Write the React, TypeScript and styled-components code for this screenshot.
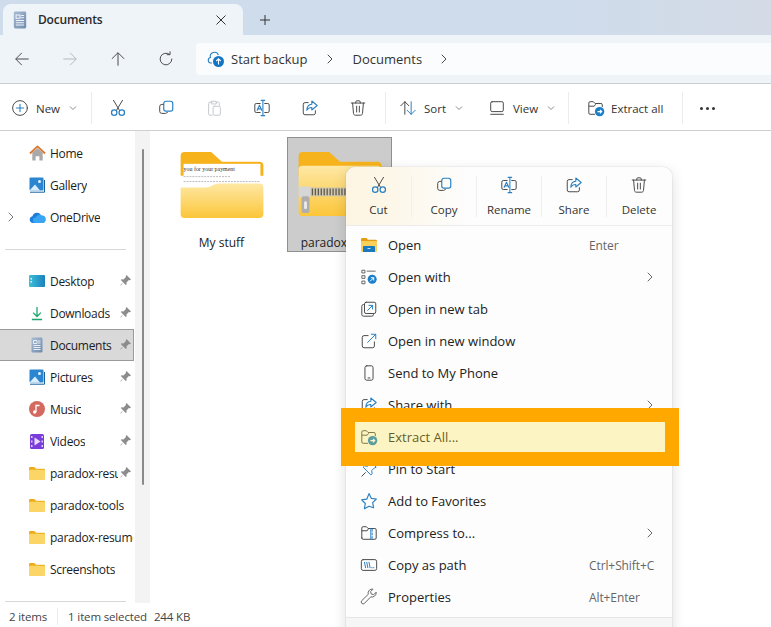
import React from 'react';
import styled, { createGlobalStyle } from 'styled-components';

const GlobalStyle = createGlobalStyle`
  html, body {
    margin: 0;
    padding: 0;
    height: 100%;
    overflow: hidden;
    background: #ffffff;
  }
  * {
    box-sizing: border-box;
  }
`;

const DARK = '#4a4a4a';
const BLUE = '#2a80c2';

type IconProps = { size?: number };

const Line = (p: React.SVGProps<SVGSVGElement> & { size?: number }) => {
  const { size = 18, children, ...rest } = p;
  return (
    <svg width={size} height={size} viewBox="0 0 20 20" fill="none" stroke={DARK} strokeWidth="1.1" strokeLinecap="round" strokeLinejoin="round" {...rest}>
      {children}
    </svg>
  );
};

const CutIcon = ({ size }: IconProps) => (
  <Line size={size}>
    <path d="M5 1.5l6.6 11M15 1.5l-6.6 11" />
    <circle cx="5.8" cy="15.2" r="3" stroke={BLUE} strokeWidth="1.4" />
    <circle cx="14.2" cy="15.2" r="3" stroke={BLUE} strokeWidth="1.4" />
  </Line>
);
const CopyIcon = ({ size }: IconProps) => (
  <Line size={size}>
    <rect x="7.5" y="2.5" width="10" height="11" rx="2.4" stroke={BLUE} strokeWidth="1.3" />
    <path d="M7 6H5.4a2.4 2.4 0 0 0-2.4 2.4v5.2a2.4 2.4 0 0 0 2.4 2.4h4.2a2.4 2.4 0 0 0 2-1.2" />
  </Line>
);
const PasteIcon = ({ size }: IconProps) => (
  <Line size={size} stroke="#c4c9cc">
    <path d="M8 3.5H5.5A1.5 1.5 0 0 0 4 5v11.5A1.5 1.5 0 0 0 5.5 18H8" />
    <path d="M7.5 2.5h5v3h-5zM12.5 3.5h2A1.5 1.5 0 0 1 16 5v2" />
    <rect x="9" y="8" width="8" height="10" rx="1.4" />
  </Line>
);
const RenameIcon = ({ size }: IconProps) => (
  <Line size={size}>
    <path d="M8 5H3.6A1.6 1.6 0 0 0 2 6.6v6.8A1.6 1.6 0 0 0 3.6 15H8M13 5h3.4A1.6 1.6 0 0 1 18 6.6v6.8a1.6 1.6 0 0 1-1.6 1.6H13" />
    <path d="M4.6 12.6L7.2 7l2.6 5.6M5.5 11h3.4" stroke={BLUE} strokeWidth="1.2" />
    <path d="M9 1.5h4M11 1.5v17M9 18.5h4" stroke={BLUE} strokeWidth="1.2" />
  </Line>
);
const ShareIcon = ({ size }: IconProps) => (
  <Line size={size}>
    <path d="M8 4H4.5A2 2 0 0 0 2.5 6v9.5a2 2 0 0 0 2 2H14a2 2 0 0 0 2-2V13" />
    <path d="M12 2.2l6 5-6 5V9.5c-2.6 0-4.4 1-5.6 3 .2-3.8 2.2-6.4 5.6-6.6z" stroke={BLUE} strokeWidth="1.2" />
  </Line>
);
const DeleteIcon = ({ size }: IconProps) => (
  <Line size={size}>
    <path d="M2.5 4.5h15M7.5 4.5V3.2c0-.7.5-1.2 1.2-1.2h2.6c.7 0 1.2.5 1.2 1.2v1.3" />
    <path d="M4 4.5l1 11.6c.1 1.1 1 1.9 2 1.9h6c1 0 1.9-.8 2-1.9l1-11.6M8.5 8v6.5M11.5 8v6.5" />
  </Line>
);
const NewIcon = () => (
  <Line>
    <circle cx="10" cy="10" r="8.2" />
    <path d="M10 6v8M6 10h8" stroke={BLUE} strokeWidth="1.2" />
  </Line>
);
const SortIcon = () => (
  <Line>
    <path d="M6.5 17V3M2 7.5L6.5 3 11 7.5" />
    <path d="M13.5 3v14M9 12.5l4.5 4.5 4.5-4.5" stroke={BLUE} />
  </Line>
);
const ViewIcon = () => (
  <Line>
    <rect x="3" y="3" width="14" height="11" rx="1.6" />
    <path d="M3 17h14" />
  </Line>
);
const ExtractIcon = () => (
  <svg width="18" height="18" viewBox="0 0 20 20" fill="none">
    <path d="M2 15.5V4.5A1.5 1.5 0 0 1 3.5 3H7l2 2h6.500A1.500 1.500 0 0 1 17 6.500V9M2 8h6l1.600-2.200M2 15.500A1.500 1.500 0 0 0 3.500 17H9" stroke={DARK} strokeWidth="1.1" />
    <circle cx="14" cy="14" r="5.2" fill="#1a7fc9" />
    <path d="M11.6 14h4.6M14.4 12l2 2-2 2" stroke="#fff" strokeWidth="1.2" />
  </svg>
);
const ArrowLeft = () => (
  <Line>
    <path d="M17 10H3.5M9.5 3.5L3 10l6.5 6.5" />
  </Line>
);
const ArrowRight = () => (
  <Line stroke="#b4b9bd">
    <path d="M3 10h13.5M10.5 3.5L17 10l-6.5 6.5" />
  </Line>
);
const ArrowUp = () => (
  <Line>
    <path d="M10 17V3.5M3.5 9.5L10 3l6.5 6.5" />
  </Line>
);
const Refresh = () => (
  <Line>
    <path d="M16.5 10a6.5 6.5 0 1 1-2.600-5.200M14.500 2v3.200h-3.200" />
  </Line>
);
const Chevron = ({ stroke = DARK }: { stroke?: string }) => (
  <svg width="10" height="10" viewBox="0 0 10 10" fill="none" stroke={stroke} strokeWidth="1" strokeLinecap="round" strokeLinejoin="round">
    <path d="M3 1l4 4-4 4" />
  </svg>
);
const Caret = () => (
  <svg width="8" height="8" viewBox="0 0 8 8" fill="none" stroke="#8a8a8a" strokeWidth="1">
    <path d="M1 2.5l3 3 3-3" />
  </svg>
);

const CloudBackup = () => (
  <svg width="18" height="18" viewBox="0 0 18 18" fill="none">
    <path d="M5 13H3.800a2.800 2.800 0 0 1-.4-5.500A4.200 4.200 0 0 1 11.400 5" stroke="#2a7fc0" strokeWidth="1.1" />
    <circle cx="11.5" cy="11.5" r="5.5" fill="#1475c4" />
    <path d="M11.5 14.5V9M9.300 11l2.200-2.200 2.200 2.200" stroke="#fff" strokeWidth="1.1" />
  </svg>
);
const DocIcon = ({ size = 16 }: { size?: number }) => (
  <svg width={size} height={size} viewBox="0 0 16 16">
    <defs>
      <linearGradient id="docGrad" x1="0" x2="1" y1="0" y2="1">
        <stop offset="0" stopColor="#a9bcd4" />
        <stop offset="1" stopColor="#6f8bad" />
      </linearGradient>
    </defs>
    <rect x="2.5" y="0.5" width="11" height="15" rx="1.2" fill="url(#docGrad)" />
    <path d="M4.500 3.500h3.500v3h-3.500zM9 4h2.500M9 6h2.500M4.500 8.500h7M4.500 10.500h7M4.500 12.500h7" stroke="#f2f6fa" strokeWidth="0.9" fill="none" />
  </svg>
);
const HomeIcon = () => (
  <svg width="17" height="17" viewBox="0 0 18 18">
    <path d="M3.500 8L9 3.500 14.500 8v8.500h-3.500v-4.500H7v4.500H3.500z" fill="#a9a9a9" />
    <path d="M1 9l8-7.500L17 9" fill="none" stroke="#d9772f" strokeWidth="1.9" strokeLinejoin="round" />
  </svg>
);
const GalleryIcon = ({ size = 16 }: { size?: number }) => (
  <svg width={size} height={size} viewBox="0 0 16 16">
    <rect x="0.5" y="0.5" width="14" height="13" rx="1" fill="#2a86d0" />
    <circle cx="10.5" cy="4.5" r="1.5" fill="#e9f4fc" />
    <path d="M.5 13.500L6 7.500l5 6z" fill="#dbeefb" />
    <path d="M1 15.200h14.500V3" fill="none" stroke="#16609e" strokeWidth="1" />
  </svg>
);
const CloudIcon = () => (
  <svg width="17" height="11" viewBox="0 0 18 12">
    <path d="M4 12a3.800 3.800 0 0 1-.5-7.500A5 5 0 0 1 13 4a3.800 3.800 0 0 1 1 8z" fill="#1d7fdc" />
    <path d="M7 12a3 3 0 0 1 0-6 4.500 4.500 0 0 1 7-2 3.900 3.900 0 0 1 0 8z" fill="#3aa5f0" />
  </svg>
);
const DesktopIcon = () => (
  <svg width="16" height="12" viewBox="0 0 16 12">
    <defs>
      <linearGradient id="deskGrad" x1="0" x2="1">
        <stop offset="0" stopColor="#3cc0d8" />
        <stop offset="1" stopColor="#1a80bf" />
      </linearGradient>
    </defs>
    <rect width="16" height="12" rx="1" fill="url(#deskGrad)" />
    <path d="M1.500 3h1.500v1.500H1.500zM1.500 6h1.500v1.500H1.500z" fill="#e4f5fb" />
  </svg>
);
const DownloadIcon = () => (
  <svg width="12" height="15" viewBox="0 0 14 16" fill="none" stroke="#1ca56f" strokeWidth="1.5">
    <path d="M7 0.500v11M2.500 7L7 11.500 11.500 7M1 15h12" />
  </svg>
);
const MusicIcon = () => (
  <svg width="16" height="16" viewBox="0 0 16 16">
    <circle cx="8" cy="8" r="8" fill="#d4695f" />
    <path d="M7 11V4.500h3.500" fill="none" stroke="#fff" strokeWidth="1.3" />
    <circle cx="5.7" cy="11" r="1.7" fill="#fff" />
  </svg>
);
const VideoIcon = () => (
  <svg width="14" height="15" viewBox="0 0 14 15">
    <rect width="14" height="15" rx="1.5" fill="#7a3ddb" />
    <path d="M1 2h1.500v2H1zM1 6.500h1.500v2H1zM1 11h1.500v2H1zM11.500 2H13v2h-1.500zM11.500 6.500H13v2h-1.500zM11.500 11H13v2h-1.500z" fill="#ddccf8" />
    <path d="M4.500 3.500l6 4-6 4z" fill="#e9ddfb" />
  </svg>
);
const SmallFolder = () => (
  <svg width="16" height="13" viewBox="0 0 16 13">
    <path d="M0 1.200A1.200 1.200 0 0 1 1.200 0h4L7 1.800h7.800A1.200 1.200 0 0 1 16 3v2H0z" fill="#eeaa18" />
    <rect y="2.8" width="16" height="10.2" rx="1" fill="#fbd566" />
  </svg>
);
const PinIcon = () => (
  <svg width="11" height="11" viewBox="0 0 11 11" fill="#8c8c8c">
    <path d="M6.500 0L11 4.500 9.800 5.200 8.900 5 6.500 7.400 6.700 9.300 5.800 10 3.300 7.500.8 10.500.3 10l3-2.500L.8 5 1.600 4.200l1.900.2L5.900 2 5.800 1.200z" />
  </svg>
);
const OpenFolderIcon = () => (
  <svg width="18" height="18" viewBox="0 -2 16 18">
    <path d="M0 1.200A1.200 1.200 0 0 1 1.200 0h4.300L7 1.800h7.800A1.200 1.200 0 0 1 16 3v2H0z" fill="#e49c12" />
    <rect y="3" width="16" height="11" rx="1" fill="#fbd05a" />
    <path d="M3 8h10a1 1 0 0 1 1 1v5H2V9a1 1 0 0 1 1-1z" fill="#1b79c0" />
    <path d="M6.500 10.500h3" stroke="#bfe0f7" />
  </svg>
);
const OpenWithIcon = () => (
  <Line>
    <path d="M2.500 2.500h3v3h-3zM2.500 8.500h3v3h-3zM2.500 14.500h3v3h-3zM8 3.500h9" strokeWidth="0.9" />
    <circle cx="13.5" cy="12.5" r="5" fill="#1a7fc9" stroke="none" />
    <path d="M11.500 14.500l3.500-3.500M12.500 10.800H15.200v2.700" stroke="#fff" />
  </Line>
);
const NewTabIcon = () => (
  <Line>
    <rect x="5" y="2.5" width="12.5" height="12.5" rx="1.8" />
    <path d="M5 5H4a2 2 0 0 0-2 2v9a2 2 0 0 0 2 2h9a2 2 0 0 0 2-2v-1" />
    <path d="M8.500 11.500l5.500-5.500M10 6h4v4" stroke={BLUE} />
  </Line>
);
const NewWindowIcon = () => (
  <Line>
    <path d="M9 4H4.500a2 2 0 0 0-2 2v9.500a2 2 0 0 0 2 2H14a2 2 0 0 0 2-2V11" />
    <path d="M8.500 11.500L17.500 2.500M12.500 2.500h5v5" stroke={BLUE} />
  </Line>
);
const PhoneIcon = () => (
  <Line>
    <rect x="5.5" y="2" width="9" height="16" rx="2" />
    <path d="M9 15.500h2" />
  </Line>
);
const PinStartIcon = () => (
  <Line>
    <path d="M12 2l6 6-2 .8-3 3 .5 3.500-1.500 1.200-8.500-8.500L5 6.500l3.500.5 3-3z" stroke={BLUE} />
    <path d="M6 14l-4 4" stroke={DARK} />
  </Line>
);
const StarIcon = () => (
  <Line>
    <path d="M10 1.800l2.500 5.200 5.700.8-4.100 4 1 5.700L10 15.800l-5.100 2.700 1-5.700-4.100-4 5.700-.8z" stroke={BLUE} strokeWidth="1.3" />
  </Line>
);
const CompressIcon = () => (
  <Line>
    <path d="M2 15.500V4.500A1.500 1.500 0 0 1 3.500 3H7l2 2h7.500A1.500 1.500 0 0 1 18 6.500v9a1.500 1.500 0 0 1-1.500 1.500h-13A1.500 1.500 0 0 1 2 15.500zM2 7.500h6l1.500-2.500" />
    <path d="M12 5v12M13.500 6v2M13.500 10v2M13.500 14v2" stroke={BLUE} />
  </Line>
);
const CopyPathIcon = () => (
  <Line>
    <rect x="1.5" y="4" width="17" height="12" rx="2" />
    <path d="M5 7l1.200 6M7.500 7l1.200 6M10 7l1.200 6" stroke={BLUE} />
    <path d="M13 13h.4M15 13h.4" stroke={BLUE} />
  </Line>
);
const WrenchIcon = () => (
  <Line>
    <path d="M18 5.500a4.500 4.500 0 0 1-6 4.300L5 17a2.100 2.100 0 0 1-3-3l7.200-7a4.500 4.500 0 0 1 5.300-5.700L11.800 4l.7 2.700 2.700.7 2.500-2.500z" stroke="#666" />
  </Line>
);

const BigFolder = ({ zipped }: { zipped?: boolean }) => {
  const grad = zipped ? 'frontZip' : 'frontPlain';
  return (
    <svg width="84" height="67" viewBox="0 0 84 67">
      <defs>
        <linearGradient id={grad} x1="0" x2="0" y1="0" y2="1">
          <stop offset="0" stopColor="#fee8a4" />
          <stop offset="1" stopColor="#fcc63a" />
        </linearGradient>
      </defs>
      <path d="M0 4a4 4 0 0 1 4-4h27l11 10h38a4 4 0 0 1 4 4v10H0z" fill="#f6b31c" />
      {zipped ? (
        <>
          <rect x="0" y="14" width="84" height="51" rx="4" fill={`url(#${grad})`} />
          <rect x="0" y="36" width="84" height="9" fill="#cfc7ae" />
          <path d="M14 37v7M17 37v7M20 37v7M23 37v7M26 37v7M29 37v7M32 37v7M35 37v7M38 37v7M41 37v7M44 37v7M47 37v7" stroke="#5e5a4e" strokeWidth="1.3" />
          <rect x="0" y="35" width="12" height="11" rx="1" fill="#d6d6d6" />
          <rect x="3" y="45" width="8" height="17" rx="2" fill="#aeaeae" />
          <rect x="5.5" y="50" width="3" height="8" rx="1.5" fill="#e9e9e9" />
        </>
      ) : (
        <>
          <rect x="3" y="12" width="78" height="30" fill="#ffffff" />
          <Paper x="3" y="19">you for your payment</Paper>
          <path d="M3 25h48M3 30h78" stroke="#a8a8a8" strokeWidth="0.8" strokeDasharray="2 1" />
          <path d="M0 36h22c5 0 6 0 10-2 3-1.500 5-2 9-2h39a4 4 0 0 1 4 4v27a4 4 0 0 1-4 4H4a4 4 0 0 1-4-4z" fill={`url(#${grad})`} />
        </>
      )}
    </svg>
  );
};

const Paper = styled.text`
  font-family: 'Liberation Serif', serif;
  font-size: 6px;
  fill: #333333;
`;

const Window = styled.div`
  position: relative;
  width: 771px;
  height: 627px;
  overflow: hidden;
  display: flex;
  flex-direction: column;
  background: #ffffff;
  color: #1c1c1c;
  font-family: 'Open Sans', 'Noto Sans', sans-serif;
  font-size: 12px;
`;

const TabStrip = styled.div`
  height: 35px;
  flex: none;
  padding: 4px 0 0 3px;
  display: flex;
  align-items: stretch;
  background: linear-gradient(90deg, #cedcec 0%, #cedcec 70%, #d4dbe6 100%);
`;

const Tab = styled.div`
  width: 240px;
  display: flex;
  align-items: center;
  padding: 0 17px 0 8px;
  gap: 9px;
  background: #eff4f9;
  border-radius: 8px 8px 0 0;
  font-size: 12px;
  font-weight: 600;
  letter-spacing: -0.2px;
  color: #2a2a2a;
`;

const TabTitle = styled.span`
  flex: 1;
`;

const TabGlyph = styled.svg`
  flex: none;
`;

const NewTab = styled.div`
  width: 44px;
  display: flex;
  align-items: center;
  justify-content: center;
`;

const AddressRow = styled.div`
  height: 49px;
  flex: none;
  display: flex;
  align-items: center;
  background: #eff4f9;
  border-bottom: 1px solid #c9ced3;
  padding-left: 13px;
`;

const NavButton = styled.div`
  width: 48px;
  flex: none;
  display: flex;
  align-items: center;
`;

const AddressBox = styled.div`
  height: 32px;
  flex: 1;
  margin-left: -9px;
  display: flex;
  align-items: center;
  padding-left: 11px;
  background: #fbfcfe;
  border-radius: 4px 0 0 4px;
  font-size: 13px;
`;

const CrumbText = styled.span<{ $left: number }>`
  margin-left: ${(p) => p.$left}px;
  color: #333333;
`;

const CrumbChevron = styled.span<{ $left: number }>`
  margin-left: ${(p) => p.$left}px;
  display: flex;
`;

const Toolbar = styled.div`
  height: 47px;
  flex: none;
  display: flex;
  align-items: center;
  padding-top: 2px;
  background: #ffffff;
  border-bottom: 1px solid #cfcfcf;
  font-size: 11.5px;
  color: #333333;
`;

const ToolButton = styled.div<{ $width: number; $left?: number; $gap?: number }>`
  width: ${(p) => p.$width}px;
  flex: none;
  display: flex;
  align-items: center;
  justify-content: ${(p) => (p.$left === undefined ? 'center' : 'flex-start')};
  padding-left: ${(p) => p.$left ?? 0}px;
  gap: ${(p) => p.$gap ?? 7}px;
`;

const ToolDivider = styled.div`
  width: 1px;
  height: 32px;
  flex: none;
  margin-right: 2px;
  background: #ececec;
`;

const ToolCaret = styled.span`
  display: flex;
  margin-left: 2px;
`;

const Dots = styled.span`
  display: flex;
  gap: 3px;
`;

const Dot = styled.i`
  width: 3px;
  height: 3px;
  border-radius: 50%;
  background: #333333;
`;

const Body = styled.div`
  height: 472px;
  flex: none;
  display: flex;
`;

const Sidebar = styled.nav`
  width: 135px;
  flex: none;
  padding-top: 6px;
  display: flex;
  flex-direction: column;
  overflow: hidden;
  letter-spacing: -0.3px;
`;

const NavRow = styled.div<{ $selected?: boolean }>`
  height: 32px;
  flex: none;
  width: 134px;
  display: flex;
  align-items: center;
  position: relative;
  background: ${(p) => (p.$selected ? '#d9d9d9' : 'transparent')};
  border: 1px solid ${(p) => (p.$selected ? '#9a9a9a' : 'transparent')};
  border-left: 0;
  white-space: nowrap;
  overflow: hidden;
`;

const NavChevron = styled.span`
  width: 27px;
  flex: none;
  display: flex;
  padding-left: 6px;
`;

const NavIcon = styled.span`
  width: 20px;
  flex: none;
  display: flex;
  justify-content: center;
`;

const NavLabel = styled.span<{ $clip?: number }>`
  margin-left: 3px;
  overflow: hidden;
  white-space: nowrap;
  max-width: ${(p) => p.$clip ?? 200}px;
`;

const NavPin = styled.span`
  position: absolute;
  right: 2px;
  top: 9px;
  display: flex;
`;

const NavSeparator = styled.div`
  height: 32px;
  flex: none;
  display: flex;
  align-items: center;
  padding-left: 5px;
  &::before {
    content: '';
    width: 121px;
    height: 1px;
    background: #d8d8d8;
  }
`;

const Gutter = styled.div`
  width: 15px;
  flex: none;
  background: #f3f3f3;
  padding: 18px 0 118px 7px;
`;

const ScrollThumb = styled.div`
  width: 2px;
  height: 100%;
  background: #8a8a8a;
  border-radius: 1px;
`;

const Files = styled.main`
  flex: 1;
  display: flex;
  align-items: flex-start;
  gap: 13px;
  padding: 6px 0 0 19px;
`;

const Tile = styled.div<{ $selected?: boolean }>`
  width: 105px;
  height: 115px;
  flex: none;
  display: flex;
  flex-direction: column;
  align-items: center;
  padding-top: 14px;
  background: ${(p) => (p.$selected ? '#cccccc' : 'transparent')};
  border: 1px solid ${(p) => (p.$selected ? '#8f8f8f' : 'transparent')};
`;

const TileName = styled.span`
  margin-top: 16px;
  font-size: 12px;
  white-space: nowrap;
`;

const StatusBar = styled.footer`
  flex: 1;
  display: flex;
  align-items: center;
  padding: 2px 0 0 9px;
  font-size: 11.5px;
  letter-spacing: -0.15px;
  color: #444444;
`;

const StatusCell = styled.span`
  padding-right: 10px;
`;

const StatusDivider = styled.i`
  width: 1px;
  height: 17px;
  background: #ececec;
  margin-right: 10px;
`;

const StatusSize = styled.span`
  margin-left: 7px;
`;

const Menu = styled.div`
  position: absolute;
  left: 346px;
  top: 167px;
  width: 326px;
  height: 480px;
  display: flex;
  flex-direction: column;
  background: #fdfdfd;
  border-radius: 9px;
  box-shadow: 0 0 1px rgba(0, 0, 0, 0.35), 0 4px 14px rgba(0, 0, 0, 0.14);
  overflow: hidden;
`;

const QuickRow = styled.div`
  height: 59px;
  flex: none;
  display: flex;
  align-items: center;
  background: linear-gradient(90deg, #fdf5e2 0%, #fdf8ec 18%, #fdfdfd 38%);
  border-bottom: 1px solid #ececec;
`;

const QuickAction = styled.div`
  width: 65px;
  height: 41px;
  flex: none;
  display: flex;
  flex-direction: column;
  align-items: center;
  justify-content: space-between;
  font-size: 11.5px;
  color: #333333;
  margin-top: 1px;
  & + & {
    border-left: 1px solid #efefef;
  }
`;

const MenuList = styled.div`
  display: flex;
  flex-direction: column;
  padding-top: 3px;
`;

const MenuRow = styled.div`
  height: 32px;
  flex: none;
  display: flex;
  align-items: center;
  padding: 0 17px 0 14px;
  font-size: 13px;
  color: #222222;
`;

const MenuIcon = styled.span`
  width: 28px;
  flex: none;
  display: flex;
`;

const MenuText = styled.span`
  flex: 1;
`;

const Shortcut = styled.span`
  width: 71px;
  margin-right: -5px;
  font-size: 12px;
  letter-spacing: -0.1px;
  color: #666666;
  white-space: nowrap;
`;

const MenuArrow = styled.span`
  display: flex;
`;

const MenuRule = styled.div`
  height: 1px;
  flex: none;
  margin-top: 4px;
  background: #e6e6e6;
`;

const MenuTail = styled.div`
  flex: 1;
  background: #f6f6f6;
`;

const Callout = styled.div`
  position: absolute;
  left: 341px;
  top: 408px;
  width: 338px;
  height: 58px;
  border: 14px solid #ffa800;
  background: rgba(252, 230, 63, 0.3);
  background-clip: padding-box;
  pointer-events: none;
`;

const quickActions = [
  { label: 'Cut', icon: <CutIcon /> },
  { label: 'Copy', icon: <CopyIcon /> },
  { label: 'Rename', icon: <RenameIcon /> },
  { label: 'Share', icon: <ShareIcon /> },
  { label: 'Delete', icon: <DeleteIcon /> },
];

const menuItems: { label: string; icon: React.ReactNode; shortcut?: string; more?: boolean }[] = [
  { label: 'Open', icon: <OpenFolderIcon />, shortcut: 'Enter' },
  { label: 'Open with', icon: <OpenWithIcon />, more: true },
  { label: 'Open in new tab', icon: <NewTabIcon /> },
  { label: 'Open in new window', icon: <NewWindowIcon /> },
  { label: 'Send to My Phone', icon: <PhoneIcon /> },
  { label: 'Share with', icon: <ShareIcon />, more: true },
  { label: 'Extract All...', icon: <ExtractIcon /> },
  { label: 'Pin to Start', icon: <PinStartIcon /> },
  { label: 'Add to Favorites', icon: <StarIcon /> },
  { label: 'Compress to...', icon: <CompressIcon />, more: true },
  { label: 'Copy as path', icon: <CopyPathIcon />, shortcut: 'Ctrl+Shift+C' },
  { label: 'Properties', icon: <WrenchIcon />, shortcut: 'Alt+Enter' },
];

const topPlaces = [
  { label: 'Home', icon: <HomeIcon /> },
  { label: 'Gallery', icon: <GalleryIcon /> },
  { label: 'OneDrive', icon: <CloudIcon />, expandable: true },
];

const pinnedPlaces: { label: string; icon: React.ReactNode; pinned?: boolean; selected?: boolean; clip?: number }[] = [
  { label: 'Desktop', icon: <DesktopIcon />, pinned: true },
  { label: 'Downloads', icon: <DownloadIcon />, pinned: true },
  { label: 'Documents', icon: <DocIcon />, pinned: true, selected: true },
  { label: 'Pictures', icon: <GalleryIcon />, pinned: true },
  { label: 'Music', icon: <MusicIcon />, pinned: true },
  { label: 'Videos', icon: <VideoIcon />, pinned: true },
  { label: 'paradox-resume', icon: <SmallFolder />, pinned: true, clip: 68 },
  { label: 'paradox-tools', icon: <SmallFolder /> },
  { label: 'paradox-resume', icon: <SmallFolder /> },
  { label: 'Screenshots', icon: <SmallFolder /> },
];

export default function App() {
  return (
    <Window>
      <GlobalStyle />
      <TabStrip>
        <Tab>
          <DocIcon size={18} />
          <TabTitle>Documents</TabTitle>
          <TabGlyph width="10" height="10" viewBox="0 0 10 10" stroke="#333" fill="none">
            <path d="M.5.5l9 9M9.500.5l-9 9" />
          </TabGlyph>
        </Tab>
        <NewTab>
          <TabGlyph width="10" height="10" viewBox="0 0 10 10" stroke="#333" fill="none">
            <path d="M5 0v10M0 5h10" />
          </TabGlyph>
        </NewTab>
      </TabStrip>

      <AddressRow>
        <NavButton><ArrowLeft /></NavButton>
        <NavButton><ArrowRight /></NavButton>
        <NavButton><ArrowUp /></NavButton>
        <NavButton><Refresh /></NavButton>
        <AddressBox>
          <CloudBackup />
          <CrumbText $left={6}>Start backup</CrumbText>
          <CrumbChevron $left={18}><Chevron /></CrumbChevron>
          <CrumbText $left={17}>Documents</CrumbText>
          <CrumbChevron $left={17}><Chevron /></CrumbChevron>
        </AddressBox>
      </AddressRow>

      <Toolbar>
        <ToolButton $width={91} $left={11}>
          <NewIcon />
          <span>New</span>
          <ToolCaret><Caret /></ToolCaret>
        </ToolButton>
        <ToolDivider />
        <ToolButton $width={48}><CutIcon /></ToolButton>
        <ToolButton $width={48}><CopyIcon /></ToolButton>
        <ToolButton $width={48}><PasteIcon /></ToolButton>
        <ToolButton $width={48}><RenameIcon /></ToolButton>
        <ToolButton $width={48}><ShareIcon /></ToolButton>
        <ToolButton $width={51} $left={15}><DeleteIcon /></ToolButton>
        <ToolDivider />
        <ToolButton $width={84} $left={11}>
          <SortIcon />
          <span>Sort</span>
          <ToolCaret><Caret /></ToolCaret>
        </ToolButton>
        <ToolButton $width={96} $left={16}>
          <ViewIcon />
          <span>View</span>
          <ToolCaret><Caret /></ToolCaret>
        </ToolButton>
        <ToolDivider />
        <ToolButton $width={111} $left={16} $gap={6}>
          <ExtractIcon />
          <span>Extract all</span>
        </ToolButton>
        <ToolDivider />
        <ToolButton $width={44}>
          <Dots><Dot /><Dot /><Dot /></Dots>
        </ToolButton>
      </Toolbar>

      <Body>
        <Sidebar>
          {topPlaces.map((place) => (
            <NavRow key={place.label}>
              <NavChevron>{place.expandable && <Chevron stroke="#777" />}</NavChevron>
              <NavIcon>{place.icon}</NavIcon>
              <NavLabel>{place.label}</NavLabel>
            </NavRow>
          ))}
          <NavSeparator />
          {pinnedPlaces.map((place, i) => (
            <NavRow key={i} $selected={place.selected}>
              <NavChevron />
              <NavIcon>{place.icon}</NavIcon>
              <NavLabel $clip={place.clip}>{place.label}</NavLabel>
              {place.pinned && <NavPin><PinIcon /></NavPin>}
            </NavRow>
          ))}
          <NavSeparator />
        </Sidebar>
        <Gutter>
          <ScrollThumb />
        </Gutter>
        <Files>
          <Tile>
            <BigFolder />
            <TileName>My stuff</TileName>
          </Tile>
          <Tile $selected>
            <BigFolder zipped />
            <TileName>paradox-tools</TileName>
          </Tile>
        </Files>
      </Body>

      <StatusBar>
        <StatusCell>2 items</StatusCell>
        <StatusDivider />
        <span>1 item selected</span>
        <StatusSize>244 KB</StatusSize>
      </StatusBar>

      <Menu>
        <QuickRow>
          {quickActions.map((a) => (
            <QuickAction key={a.label}>
              {a.icon}
              <span>{a.label}</span>
            </QuickAction>
          ))}
        </QuickRow>
        <MenuList>
          {menuItems.map((item) => (
            <MenuRow key={item.label}>
              <MenuIcon>{item.icon}</MenuIcon>
              <MenuText>{item.label}</MenuText>
              {item.shortcut && <Shortcut>{item.shortcut}</Shortcut>}
              {item.more && <MenuArrow><Chevron stroke="#666" /></MenuArrow>}
            </MenuRow>
          ))}
        </MenuList>
        <MenuRule />
        <MenuTail />
      </Menu>

      <Callout />
    </Window>
  );
}
